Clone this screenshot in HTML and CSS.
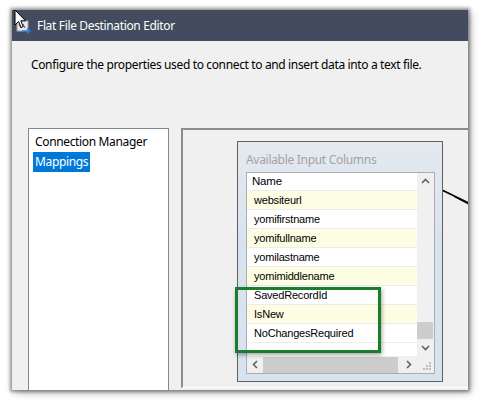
FILE: index.html
```html
<!DOCTYPE html>
<html>
<head>
<meta charset="utf-8">
<link rel="stylesheet" href="styles.css">
</head>
<body>
<div class="window">
  <div class="titlebar">
    <svg class="app-icon" width="16" height="14" viewBox="0 0 16 14">
      <rect x="1" y="1" width="11" height="10" fill="#e8e8e8" stroke="#9aa0a8" stroke-width="1"/>
      <path d="M3 4 L5 8 L7 4 L9 8" fill="none" stroke="#555" stroke-width="1"/>
      <path d="M6 11 H14 M11 8.5 L14 11 L11 13.5" fill="none" stroke="#2f7ad8" stroke-width="1.6"/>
    </svg>
    <span class="title">Flat File Destination Editor</span>
  </div>
  <div class="content">
    <p class="intro">Configure the properties used to connect to and insert data into a text file.</p>
    <div class="panes">
      <div class="nav">
        <div class="nav-item">Connection Manager</div>
        <div class="nav-item selected">Mappings</div>
      </div>
      <div class="designer">
        <svg class="map-line" width="30" height="18" viewBox="0 0 30 18">
          <path d="M0 1 L27 14" stroke="#000" stroke-width="1.6" fill="none"/>
          <path d="M12 7.5 L27 15.5" stroke="#000" stroke-width="1" fill="none"/>
        </svg>
        <div class="columns-box">
          <div class="box-title">Available Input Columns</div>
          <div class="grid">
            <div class="grid-main">
              <div class="rows">
                <div class="row header">Name</div>
                <div class="row alt">websiteurl</div>
                <div class="row">yomifirstname</div>
                <div class="row alt">yomifullname</div>
                <div class="row">yomilastname</div>
                <div class="row alt">yomimiddlename</div>
                <div class="row">SavedRecordId</div>
                <div class="row alt">IsNew</div>
                <div class="row">NoChangesRequired</div>
              </div>
              <div class="vscroll">
                <svg class="arrow" width="9" height="6" viewBox="0 0 9 6"><path d="M1 5 L4.5 1.5 L8 5" fill="none" stroke="#606060" stroke-width="1.6"/></svg>
                <div class="vtrack"><div class="vthumb"></div></div>
                <svg class="arrow" width="9" height="6" viewBox="0 0 9 6"><path d="M1 1 L4.5 4.5 L8 1" fill="none" stroke="#606060" stroke-width="1.6"/></svg>
              </div>
            </div>
            <div class="hscroll">
              <svg class="harrow" width="6" height="9" viewBox="0 0 6 9"><path d="M5 1 L1.5 4.5 L5 8" fill="none" stroke="#606060" stroke-width="1.6"/></svg>
              <div class="htrack"><div class="hthumb"></div></div>
              <svg class="harrow" width="6" height="9" viewBox="0 0 6 9"><path d="M1 1 L4.5 4.5 L1 8" fill="none" stroke="#606060" stroke-width="1.6"/></svg>
              <svg class="grip" width="17" height="17" viewBox="0 0 17 17">
                <rect x="12" y="6" width="2" height="2" fill="#bcbcbc"/>
                <rect x="9" y="9" width="2" height="2" fill="#bcbcbc"/>
                <rect x="12" y="9" width="2" height="2" fill="#bcbcbc"/>
                <rect x="6" y="12" width="2" height="2" fill="#bcbcbc"/>
                <rect x="9" y="12" width="2" height="2" fill="#bcbcbc"/>
                <rect x="12" y="12" width="2" height="2" fill="#bcbcbc"/>
              </svg>
            </div>
          </div>
          <div class="highlight"></div>
        </div>
      </div>
    </div>
  </div>
</div>
<svg class="cursor" width="13" height="20" viewBox="0 0 13 20">
  <path d="M1 1 L1 16 L4.5 12.5 L7 18.5 L9.2 17.6 L6.8 11.8 L11.5 11.8 Z" fill="#fff" stroke="#000" stroke-width="1" stroke-linejoin="round"/>
</svg>
</body>
</html>
```

FILE: styles.css
```css
html, body {
  margin: 0;
  padding: 0;
  background: #ffffff;
}
body {
  width: 480px;
  height: 401px;
  overflow: hidden;
  position: relative;
  font-family: "Noto Sans", "Open Sans", sans-serif;
}
.window {
  margin: 10px 0 0 12px;
  width: 456px;
  height: 380px;
  background: #f0f0f0;
  overflow: hidden;
  box-shadow: 0 0 3px 2px rgba(0,0,0,0.35), 2px 2px 8px rgba(0,0,0,0.35);
  display: flex;
  flex-direction: column;
}
.titlebar {
  height: 31px;
  flex: none;
  background: #424c5e;
  display: flex;
  align-items: center;
  padding-left: 4px;
  gap: 5px;
  color: #ffffff;
}
.app-icon { margin-top: 2px; }
.title {
  font-size: 12px;
  letter-spacing: -0.35px;
}
.content {
  flex: 1;
  display: flex;
  flex-direction: column;
  min-height: 0;
}
.intro {
  margin: 16px 0 0 19px;
  font-size: 12px;
  line-height: 16px;
  letter-spacing: -0.36px;
  color: #000;
}
.panes {
  margin-top: 55px;
  padding-left: 16px;
  display: flex;
  gap: 12px;
  align-items: flex-start;
}
.nav {
  width: 141px;
  height: 280px;
  flex: none;
  box-sizing: border-box;
  background: #fff;
  border: 1px solid #828790;
  padding: 3px 0 0 4px;
  font-size: 12px;
  line-height: 20px;
  letter-spacing: -0.35px;
}
.nav-item {
  padding: 0 2px 0 2px;
  color: #000;
  width: fit-content;
}
.nav-item.selected {
  background: #0078d7;
  color: #fff;
}
.designer {
  position: relative;
  width: 320px;
  height: 260px;
  flex: none;
  box-sizing: border-box;
  border-top: 2px solid #8c8c8c;
  border-left: 2px solid #8c8c8c;
  border-bottom: 1px solid #ffffff;
  background: #f0f0f0;
  padding: 11px 0 0 54px;
}
.map-line {
  position: absolute;
  left: 259px;
  top: 59px;
}
.columns-box {
  position: relative;
  width: 206px;
  height: 241px;
  box-sizing: border-box;
  border: 1px solid #5f5f5f;
  background: linear-gradient(#e4e9ef, #d9e3ef 40%, #d8e3f0);
  padding: 10px 0 0 8px;
}
.box-title {
  font-size: 12px;
  line-height: 16px;
  color: #a3a3a3;
  letter-spacing: -0.3px;
  margin-bottom: 4px;
}
.grid {
  width: 189px;
  height: 202px;
  box-sizing: border-box;
  border: 1px solid #adadad;
  background: #fff;
  display: flex;
  flex-direction: column;
}
.grid-main {
  height: 183px;
  display: flex;
}
.rows {
  width: 170px;
  background: #fff;
  font-family: "Liberation Sans", Arial, sans-serif;
  font-size: 11px;
  letter-spacing: -0.2px;
  color: #000;
}
.row {
  height: 18px;
  line-height: 18px;
  border-bottom: 1px solid #ececec;
  padding-left: 7px;
  background: #fff;
}
.row.header {
  height: 17px;
  line-height: 17px;
  padding-left: 5px;
  font-size: 11.5px;
}
.row.alt { background: #fdfde3; }
.vscroll {
  width: 17px;
  background: #f0f0f0;
  display: flex;
  flex-direction: column;
  align-items: center;
}
.arrow { flex: none; margin: 5px 0; }
.vtrack {
  flex: 1;
  width: 100%;
  position: relative;
}
.vthumb {
  position: absolute;
  left: 0;
  right: 1px;
  top: 133px;
  height: 17px;
  background: #cdcdcd;
}
.hscroll {
  height: 17px;
  background: #f0f0f0;
  display: flex;
  align-items: center;
}
.harrow { flex: none; margin: 0 5px; }
.htrack {
  flex: 1;
  height: 100%;
  display: flex;
  align-items: center;
}
.hthumb {
  width: 135px;
  height: 16px;
  background: #cdcdcd;
}
.grip { flex: none; }
.highlight {
  position: absolute;
  left: -3px;
  top: 145px;
  width: 146px;
  height: 66px;
  box-sizing: border-box;
  border: 3px solid #1a7d2c;
  box-shadow: 1px 2px 4px rgba(0,0,0,0.35);
}
.cursor {
  position: absolute;
  left: 14px;
  top: 9px;
}
```
